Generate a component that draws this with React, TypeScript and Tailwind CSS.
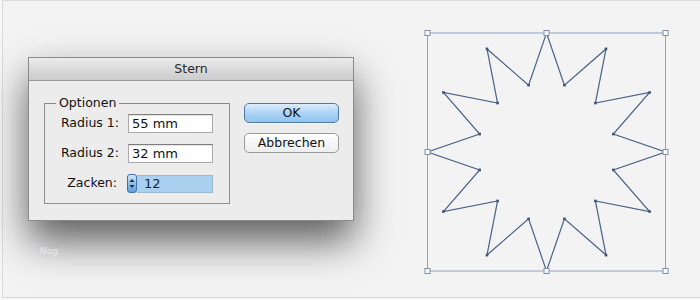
import React from 'react';

const font = { fontFamily: '"DejaVu Sans", "Liberation Sans", sans-serif' };

function StarCanvas() {
  const cx = 125.5;
  const cy = 126;
  const R = 119;
  const r = 69.2;
  const pts = Array.from({ length: 24 }, (_, i) => {
    const a = (i * 15 * Math.PI) / 180;
    const rad = i % 2 === 0 ? R : r;
    return [cx + rad * Math.sin(a), cy - rad * Math.cos(a)];
  });
  const box = { x: cx - R, y: cy - R, s: R * 2 };
  const handles = [
    [box.x, box.y], [cx, box.y], [box.x + box.s, box.y],
    [box.x, cy], [box.x + box.s, cy],
    [box.x, box.y + box.s], [cx, box.y + box.s], [box.x + box.s, box.y + box.s],
  ];

  return (
    <svg width="252" height="252" viewBox="0 0 252 252" className="ml-[67px] mt-[25px] shrink-0">
      <rect x={box.x} y={box.y} width={box.s} height={box.s} fill="none" stroke="#8ea2bf" strokeWidth="1" />
      <polygon
        points={pts.map((p) => p.join(',')).join(' ')}
        fill="none"
        stroke="#4a6285"
        strokeWidth="1.2"
        strokeLinejoin="miter"
      />
      {pts.map((p, i) => (
        <rect key={i} x={p[0] - 1.3} y={p[1] - 1.3} width="2.6" height="2.6" fill="#3d5679" />
      ))}
      {handles.map((h, i) => (
        <rect key={'h' + i} x={h[0] - 2.5} y={h[1] - 2.5} width="5" height="5" fill="#ffffff" stroke="#7b8fad" strokeWidth="1" />
      ))}
    </svg>
  );
}

function Stepper() {
  return (
    <div className="w-[10px] h-[19px] shrink-0 rounded-[3px] border border-[#3a73ad] bg-gradient-to-b from-[#cfe6f9] via-[#92c2ec] to-[#5f9ddb] flex items-center justify-center">
      <svg width="6" height="11" viewBox="0 0 6 11">
        <path d="M3 1 L5.5 4 L0.5 4 Z" fill="#1d2b3d" />
        <path d="M3 10 L5.5 7 L0.5 7 Z" fill="#1d2b3d" />
      </svg>
    </div>
  );
}

function Field({ value }: { value: string }) {
  return (
    <div className="ml-[9px] w-[85px] h-[19px] bg-white border border-[#aaaaaa] border-t-[#7d7d7d] shadow-[inset_0_1px_1px_rgba(0,0,0,0.12)] flex items-center pl-[3px] text-[13px] text-[#111]">
      {value}
    </div>
  );
}

function Dialog() {
  return (
    <div className="w-[326px] h-[164px] bg-[#ececec] border border-[#8a8a8a] shadow-[0_20px_38px_rgba(0,0,0,0.62)] flex flex-col">
      <div className="h-[23px] shrink-0 bg-gradient-to-b from-[#ebebeb] to-[#cbcbcb] border-b border-[#9c9c9c] flex items-center justify-center text-[12.5px] text-[#2a2a2a]">
        Stern
      </div>
      <div className="flex-1 flex items-start pl-[15px] pt-[14px]">
        <fieldset className="w-[186px] h-[109px] border border-[#8f8f8f] border-t-[#8a8a8a]">
          <legend className="ml-[11px] px-[3px] text-[12.5px] leading-[16px] text-[#111]">Optionen</legend>
          <div className="pt-[3px] flex flex-col gap-[11px]">
            <div className="h-[19px] flex items-center">
              <span className="w-[74px] text-right text-[12.5px] text-[#111]">Radius 1:</span>
              <Field value="55 mm" />
            </div>
            <div className="h-[19px] flex items-center">
              <span className="w-[74px] text-right text-[12.5px] text-[#111]">Radius 2:</span>
              <Field value="32 mm" />
            </div>
            <div className="h-[19px] flex items-center">
              <span className="w-[74px] text-right pr-[2px] text-[12.5px] text-[#111]">Zacken:</span>
              <div className="ml-[8px] w-[86px] h-[19px] flex items-center">
                <Stepper />
                <div className="flex-1 h-[18px] bg-[#a9d0ee] border border-[#9fb8cc] border-l-0 flex items-center pl-[7px] text-[13px] text-[#1a2533]">
                  12
                </div>
              </div>
            </div>
          </div>
        </fieldset>
        <div className="ml-[14px] mt-[8px] flex flex-col gap-[10px]">
          <button className="w-[95px] h-[20px] rounded-[5px] border border-[#50799f] bg-gradient-to-b from-[#dcedfb] via-[#acd3f3] to-[#91c6f0] text-[12.5px] text-[#111] flex items-center justify-center shadow-[0_1px_0_rgba(255,255,255,0.6)]">
            OK
          </button>
          <button className="w-[95px] h-[20px] rounded-[5px] border border-[#9b9b9b] bg-gradient-to-b from-[#ffffff] to-[#eeeeee] text-[12.5px] text-[#111] flex items-center justify-center">
            Abbrechen
          </button>
        </div>
      </div>
    </div>
  );
}

export default function App() {
  return (
    <div className="w-[700px] h-[300px] overflow-hidden bg-[#f6f6f6] pl-[2px]" style={font}>
      <div className="h-[298px] border-l border-t border-b border-[#dcdcdc] bg-[#f3f3f3] flex items-start">
        <div className="ml-[25px] mt-[56px] flex flex-col shrink-0">
          <Dialog />
          <span className="mt-[24px] ml-[12px] text-[9px] text-white/60">Nog</span>
        </div>
        <StarCanvas />
      </div>
    </div>
  );
}
